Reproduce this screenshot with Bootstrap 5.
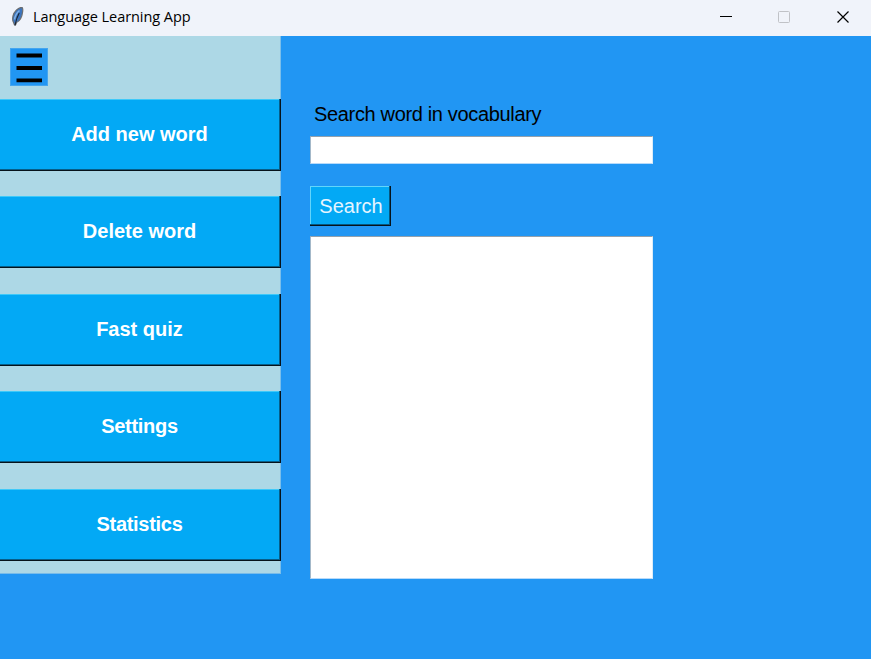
<!DOCTYPE html>
<html lang="en">
<head>
<meta charset="utf-8">
<meta name="viewport" content="width=device-width, initial-scale=1">
<title>Language Learning App</title>
<link href="https://cdn.jsdelivr.net/npm/bootstrap@5.3.0/dist/css/bootstrap.min.css" rel="stylesheet">
<style>
body{background:#2196f3;font-family:"Liberation Sans",Arial,sans-serif;color:#000}
.titlebar{height:36px;background:#f0f3fa;font-family:"Open Sans","Noto Sans",sans-serif;padding-left:9px}
.app-title{font-size:14.5px;line-height:20px;margin-left:7px;white-space:nowrap;letter-spacing:-.06px;margin-top:-2px}
.win-btn{width:59px;height:36px;padding:0;border:0;background:none}
.win-btns{margin-right:-1px}
.side{width:281px;height:538px;background:#add8e6;padding-top:12px;border-right:1px solid #7cbfea;border-bottom:1px solid #78bcea}
.burger{width:38px;height:38px;margin-left:10px;margin-bottom:12.6px;padding:0;border:1px solid #45a5ee;background:#2196f3;flex:none}
.menu{gap:25.5px}
.menu-btn{width:281px;height:72px;flex:none;padding:0 2px 2px 0;border:0;border-radius:0;background:#03a9f5;color:#fff;font-weight:700;font-size:20px;line-height:24px;box-shadow:inset -1px -1px #06131b,inset -2px -2px #075e88,inset 0 1px #3ec9f9}
.menu-btn:hover{background:#03a9f5;color:#fff}
.snug{letter-spacing:-.3px}
.main{padding:67px 0 0 29px}
.field-label{font-size:20px;line-height:23px;padding-left:4px;margin-bottom:10px;white-space:nowrap;letter-spacing:-.34px}
.field{width:343px;border:1px solid;border-color:#93a1ad #dcecf8 #b7dafa #a3b8c9;border-radius:0;background:#fff;padding:0 4px}
.entry{height:28px;margin-bottom:22px}
.go{width:81px;height:40px;padding:0 0 0 1px;border:0;border-radius:0;background:#03a9f5;color:#e6f5ff;font-size:20px;line-height:24px;box-shadow:inset -1px -1px #06131b,inset -2px -2px #07577f,inset 1px 1px #62d5fb;margin-bottom:10px}
.results{height:343px}
</style>
<script src="https://cdn.jsdelivr.net/npm/bootstrap@5.3.0/dist/js/bootstrap.bundle.min.js"></script>
</head>
<body class="vh-100 overflow-hidden d-flex flex-column">
<header class="titlebar d-flex align-items-center flex-shrink-0">
  <svg width="17" height="22" viewBox="0 0 17 22" aria-hidden="true">
    <path d="M13 .3C9 .8 5 4.500 4 9C3.400 12 3.500 14 4.500 15.300L5.500 18H6.500L7.500 15.500C11 14 13 10 13.600 5C13.900 3 13.900 1 13 .3Z" fill="#3c74bd" stroke="#6b6d70" stroke-width="1.200"/>
    <path d="M10.500 3.500C7.500 6 6 9 5.500 12.500" fill="none" stroke="#7fb0e6" stroke-width="1.600"/>
    <path d="M10.200 6C8.500 9 7 13 6 18.300" fill="none" stroke="#1b2330" stroke-width="1.100"/>
  </svg>
  <span class="app-title">Language Learning App</span>
  <div class="win-btns ms-auto d-flex">
    <button class="win-btn" aria-label="Minimize"><svg class="d-block" width="59" height="36"><path d="M25 16.500H37" stroke="#000"/></svg></button>
    <button class="win-btn" aria-label="Maximize"><svg class="d-block" width="59" height="36"><rect x="24.500" y="11.500" width="11" height="11" rx="1" fill="none" stroke="#c0c2c7"/></svg></button>
    <button class="win-btn" aria-label="Close"><svg class="d-block" width="59" height="36"><path d="M24.500 11.500L35.500 22.500M35.500 11.500L24.500 22.500" stroke="#000" stroke-width="1.200"/></svg></button>
  </div>
</header>
<div class="d-flex flex-grow-1 align-items-start">
  <nav class="side d-flex flex-column flex-shrink-0">
    <button class="burger" aria-label="Menu"><svg class="d-block" width="36" height="36"><path d="M5.500 6.500H31M5.500 19H31M5.500 31.300H31" stroke="#000" stroke-width="3.800"/></svg></button>
    <div class="menu d-flex flex-column">
      <button class="btn menu-btn">Add new word</button>
      <button class="btn menu-btn">Delete word</button>
      <button class="btn menu-btn">Fast quiz</button>
      <button class="btn menu-btn snug">Settings</button>
      <button class="btn menu-btn snug">Statistics</button>
    </div>
  </nav>
  <main class="main d-flex flex-column align-items-start">
    <label class="field-label" for="word">Search word in vocabulary</label>
    <input id="word" class="form-control field entry" type="text">
    <button class="btn go">Search</button>
    <div class="field results"></div>
  </main>
</div>
</body>
</html>
